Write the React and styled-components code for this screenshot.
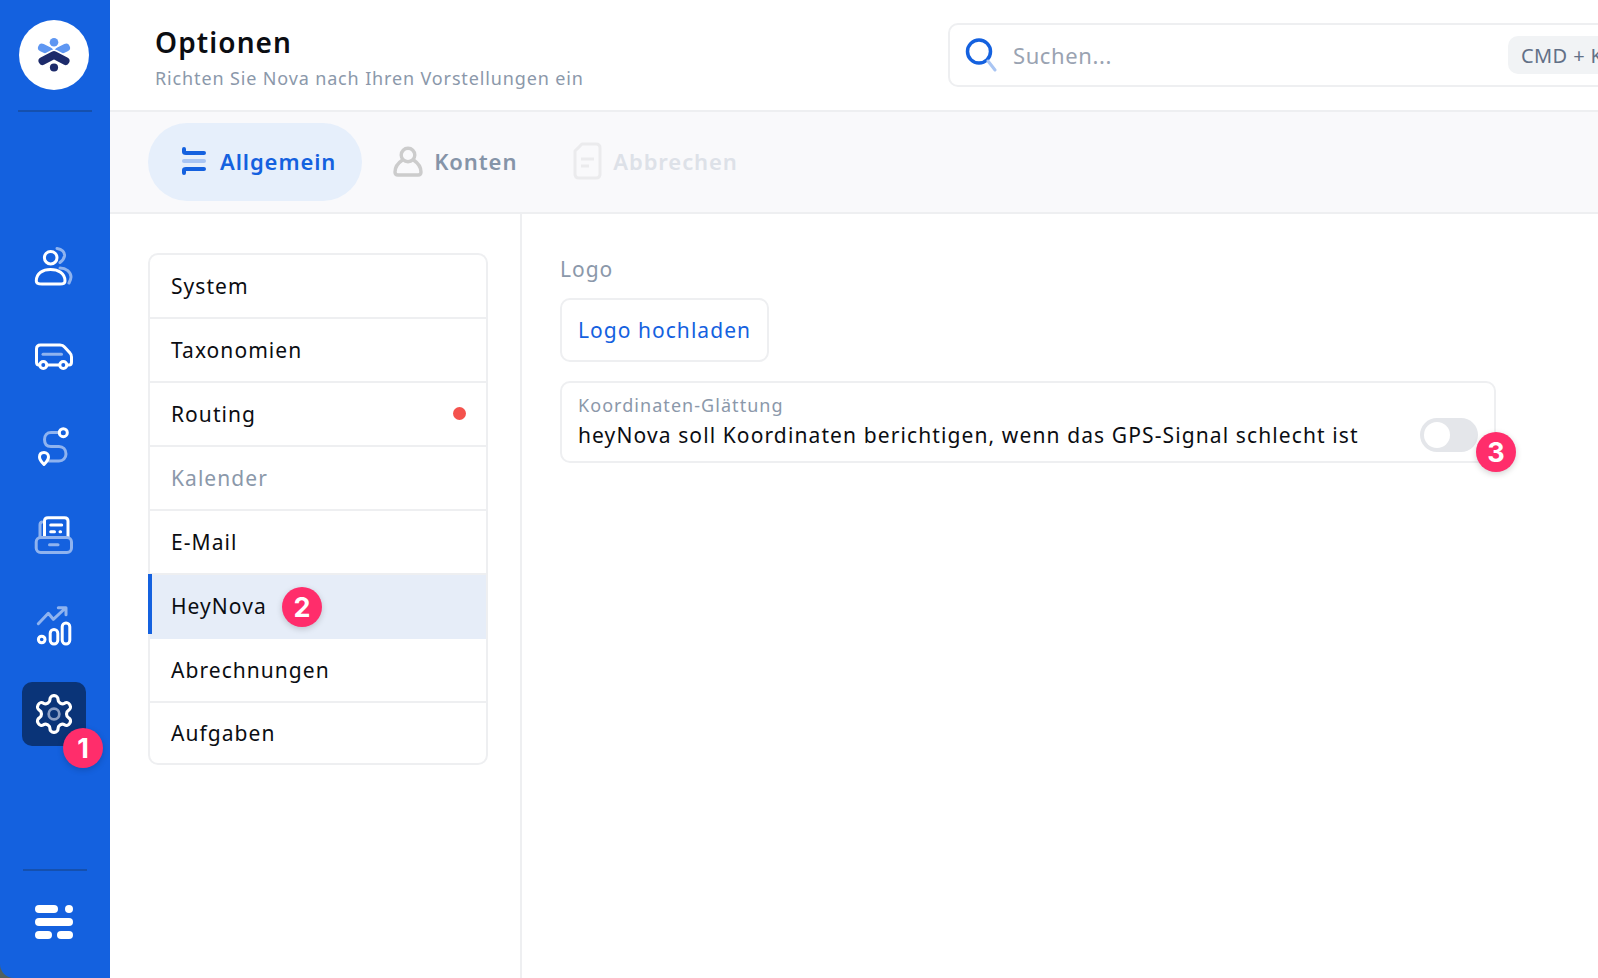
import React from "react";
import styled, { createGlobalStyle } from "styled-components";

const GlobalStyle = createGlobalStyle`
  html, body { margin: 0; padding: 0; }
  body {
    font-family: "Noto Sans", "Open Sans", sans-serif;
    background: #fff;
    overflow: hidden;
  }
  * { box-sizing: border-box; }
`;

const Shell = styled.div`
  display: flex;
  width: 1598px;
  height: 978px;
  background: #51615f;
  overflow: hidden;
`;

const Sidebar = styled.aside`
  width: 110px;
  flex-shrink: 0;
  display: flex;
  flex-direction: column;
  align-items: center;
  background: #1461df;
  padding: 20px 0 38px;
  border-bottom-left-radius: 14px;
`;

const LogoCircle = styled.div`
  width: 70px;
  height: 70px;
  border-radius: 50%;
  background: #fff;
  margin-right: 2px;
`;

const SideRule = styled.div`
  width: ${(props) => props.width}px;
  height: 2px;
  background: #1550ae;
  margin-top: ${(props) => props.top}px;
`;

const SideNav = styled.nav`
  display: flex;
  flex-direction: column;
  gap: 26px;
  margin: 120px 2px 0 0;
`;

const SideItem = styled.div`
  position: relative;
  width: 64px;
  height: 64px;
  display: flex;
  align-items: center;
  justify-content: center;
  border-radius: 10px;
  background: ${(props) => (props.active ? "#0a3478" : "transparent")};
`;

const SideBottom = styled.div`
  margin-top: auto;
  display: flex;
  flex-direction: column;
  align-items: center;
  gap: 34px;
`;

const Badge = styled.span`
  position: absolute;
  left: ${(props) => props.left}px;
  top: ${(props) => props.top}px;
  width: 40px;
  height: 40px;
  border-radius: 50%;
  display: flex;
  align-items: center;
  justify-content: center;
  background: #ff2d6b;
  color: #fff;
  font-family: Inter, "Liberation Sans", sans-serif;
  font-size: 27px;
  font-weight: 700;
  letter-spacing: 0;
  box-shadow: 0 2px 6px rgba(0, 0, 0, 0.18);
  z-index: 2;
`;

const Main = styled.main`
  flex: 1;
  min-width: 0;
  display: flex;
  flex-direction: column;
  background: #fff;
`;

const Header = styled.header`
  height: 112px;
  flex-shrink: 0;
  display: flex;
  align-items: flex-start;
  padding: 23px 0 0 45px;
  border-bottom: 2px solid #eeeff1;
`;

const HeaderText = styled.div`
  width: 793px;
  flex-shrink: 0;
`;

const Title = styled.h1`
  margin: 0;
  font-size: 28px;
  line-height: 38px;
  font-weight: 600;
  letter-spacing: 1.1px;
  color: #0b0d12;
`;

const Subtitle = styled.p`
  margin: 3px 0 0;
  font-size: 18px;
  line-height: 28px;
  letter-spacing: 0.86px;
  color: #8b98aa;
`;

const Search = styled.div`
  width: 800px;
  height: 64px;
  flex-shrink: 0;
  display: flex;
  align-items: center;
  padding-left: 15px;
  border: 2px solid #eeeff1;
  border-radius: 10px;
`;

const Placeholder = styled.span`
  flex: 1;
  margin-left: 14px;
  font-size: 22px;
  letter-spacing: 0.6px;
  color: #9aa3b2;
`;

const Kbd = styled.span`
  width: 230px;
  height: 38px;
  flex-shrink: 0;
  display: flex;
  align-items: center;
  padding-left: 13px;
  margin-right: 8px;
  border-radius: 10px;
  background: #f1f3f5;
  font-size: 20px;
  letter-spacing: 0.4px;
  color: #627087;
`;

const TabBar = styled.div`
  height: 102px;
  flex-shrink: 0;
  display: flex;
  align-items: center;
  padding-left: 38px;
  background: #f9f9fb;
  border-bottom: 2px solid #eeeff1;
`;

const Tab = styled.div`
  height: 78px;
  display: flex;
  align-items: center;
  gap: ${(props) => (props.active ? 14 : 11)}px;
  padding: ${(props) => (props.active ? "0 26px 2px 34px" : "0 25px 2px 31px")};
  border-radius: 39px;
  background: ${(props) => (props.active ? "#e6effb" : "transparent")};
  color: ${(props) => props.color};
  font-size: 22px;
  font-weight: 600;
  letter-spacing: 0.9px;
`;

const Body = styled.div`
  flex: 1;
  min-height: 0;
  display: flex;
`;

const ListPane = styled.div`
  width: 412px;
  flex-shrink: 0;
  padding: 39px 0 0 38px;
  border-right: 2px solid #eeeff1;
`;

const List = styled.ul`
  width: 340px;
  margin: 0;
  padding: 0;
  list-style: none;
  border: 2px solid #eeeff1;
  border-radius: 10px;
`;

const Row = styled.li`
  position: relative;
  height: 64px;
  display: flex;
  align-items: center;
  padding: 0 20px 0 21px;
  font-size: 21px;
  letter-spacing: 1.05px;
  color: ${(props) => (props.muted ? "#8b98aa" : "#0b0d12")};
  background: ${(props) => (props.active ? "#e6edf8" : "transparent")};
  border-bottom: 2px solid ${(props) => (props.active ? "#e6edf8" : "#eeeff1")};

  &:last-child {
    height: 60px;
    border-bottom: 0;
  }

  ${(props) =>
    props.active &&
    `
    &::before {
      content: "";
      position: absolute;
      left: -2px;
      top: -1px;
      bottom: 3px;
      width: 4px;
      background: #1461df;
    }
  `}
`;

const RowDot = styled.span`
  width: 13px;
  height: 13px;
  margin: 0 0 2px auto;
  border-radius: 50%;
  background: #f4524d;
`;

const Content = styled.section`
  flex: 1;
  padding: 38px 0 0 38px;
`;

const FieldLabel = styled.div`
  font-size: 21px;
  line-height: 34px;
  letter-spacing: 1px;
  color: #8b98aa;
`;

const UploadButton = styled.button`
  display: block;
  width: 209px;
  height: 64px;
  margin-top: 12px;
  padding: 0;
  border: 2px solid #eeeff1;
  border-radius: 10px;
  background: #fff;
  font-family: inherit;
  font-size: 21px;
  letter-spacing: 1.05px;
  color: #1461df;
`;

const OptionCard = styled.div`
  width: 936px;
  height: 82px;
  margin-top: 19px;
  display: flex;
  align-items: flex-end;
  justify-content: space-between;
  padding: 0 16px 10px 16px;
  border: 2px solid #eeeff1;
  border-radius: 10px;
`;

const OptionLabel = styled.div`
  margin-bottom: 2px;
  font-size: 18px;
  line-height: 24px;
  letter-spacing: 1.05px;
  color: #8b98aa;
`;

const OptionText = styled.div`
  font-size: 21px;
  line-height: 32px;
  letter-spacing: 1.11px;
  color: #0b0d12;
`;

const Toggle = styled.div`
  position: relative;
  width: 58px;
  height: 34px;
  margin-bottom: -1px;
  padding: 4px;
  border-radius: 17px;
  background: #e4e6ea;
`;

const Knob = styled.span`
  display: block;
  width: 26px;
  height: 26px;
  border-radius: 50%;
  background: #fff;
`;

const light = "#8fb3ef";

const LogoMark = () => (
  <svg width="70" height="70" viewBox="0 0 70 70">
    <circle cx="35" cy="22.3" r="4.3" fill="#5f97f2" />
    <path d="M23 27.7L30 31M47 27.700L40 31" stroke="#5f97f2" strokeWidth="8" strokeLinecap="round" />
    <path d="M23.500 41L35 35L46.500 41" fill="none" stroke="#fff" strokeWidth="11" strokeLinecap="round" strokeLinejoin="round" />
    <path d="M23.500 41L35 35L46.500 41" fill="none" stroke="#1d2b6b" strokeWidth="8" strokeLinecap="round" strokeLinejoin="round" />
    <circle cx="35" cy="47.500" r="4.100" fill="#1d2b6b" />
  </svg>
);

const SideIcon = styled.svg.attrs({ width: 40, height: 40, viewBox: "0 0 40 40", fill: "none" })`
  margin: 3px 2px 0 0;
  stroke: #fff;
  stroke-width: 3;
  stroke-linecap: round;
  stroke-linejoin: round;
`;

const PersonIcon = () => (
  <SideIcon>
    <circle cx="17.7" cy="11.7" r="6.3" />
    <path d="M9 38H27Q32 38 32 35C32 27 25 23.5 17.5 23.5C10 23.5 3.3 27 3.3 35Q3.3 38 9 38Z" />
    <path d="M24 2.5C29 3 32 6 31.5 10C31 13 29 15 27 16.5M27 22C33 22 38 26 38 31C38 33 37 35 36 37" stroke={light} />
  </SideIcon>
);

const VanIcon = () => (
  <SideIcon>
    <path d="M6.5 29H6Q3.5 29 3.5 26V13Q3.5 9 7.5 9H27Q30 9 31.5 11L37 17Q38.5 18.5 38.5 21V26Q38.5 29 36 29H34M26.5 29H14" />
    <circle cx="10.3" cy="29" r="3.5" />
    <circle cx="30.3" cy="29" r="3.5" />
    <path d="M10 18.3H28.5" stroke={light} />
  </SideIcon>
);

const RouteIcon = () => (
  <SideIcon>
    <path d="M26 6.5H18C14 6.5 11.5 9.5 11.5 13.5C11.5 18 14 20.5 18 20.5H26C30 20.5 33 23.5 33 28C33 32 30 35 26 35H16" stroke={light} />
    <circle cx="30.3" cy="6.7" r="4" />
    <path d="M11 26.5C8 26.5 6.5 28.5 6.5 31C6.5 34 9 36.5 11 38.5C13 36.5 15.5 34 15.5 31C15.5 28.5 13.5 26.5 11 26.5Z" />
  </SideIcon>
);

const FaxIcon = () => (
  <SideIcon>
    <path d="M7 21V9Q7 6.5 9 6" stroke={light} />
    <path d="M11.5 21V5Q11.5 1.8 15 1.8H31.5Q35 1.8 35 5V21" />
    <rect x="3.2" y="21.5" width="35.3" height="15" rx="4.5" stroke={light} />
    <path d="M17.7 9H28.7M17.7 15.7H21.5M27 15.7H27.6" />
    <path d="M16.5 28.7H25" stroke={light} />
  </SideIcon>
);

const ChartIcon = () => (
  <SideIcon>
    <path d="M5.3 17.7L15.3 7.3L20.3 13.3L32 2.5M25.3 1.7H33V8.8" stroke={light} />
    <circle cx="8.7" cy="33.5" r="3.3" />
    <rect x="17.2" y="23.5" width="7.6" height="14.5" rx="3.8" />
    <rect x="29.2" y="17" width="7.6" height="21" rx="3.8" />
  </SideIcon>
);

const GearIcon = () => (
  <svg width="44" height="44" viewBox="0 0 24 24" fill="none" strokeLinecap="round" strokeLinejoin="round">
    <path
      d="M12.22 2h-.44a2 2 0 0 0-2 2v.18a2 2 0 0 1-1 1.73l-.43.25a2 2 0 0 1-2 0l-.15-.08a2 2 0 0 0-2.73.73l-.22.38a2 2 0 0 0 .73 2.73l.15.1a2 2 0 0 1 1 1.72v.51a2 2 0 0 1-1 1.74l-.15.09a2 2 0 0 0-.73 2.73l.22.38a2 2 0 0 0 2.73.73l.15-.08a2 2 0 0 1 2 0l.43.25a2 2 0 0 1 1 1.73V20a2 2 0 0 0 2 2h.44a2 2 0 0 0 2-2v-.18a2 2 0 0 1 1-1.73l.43-.25a2 2 0 0 1 2 0l.15.08a2 2 0 0 0 2.73-.73l.22-.39a2 2 0 0 0-.73-2.73l-.15-.08a2 2 0 0 1-1-1.74v-.5a2 2 0 0 1 1-1.74l.15-.09a2 2 0 0 0 .73-2.73l-.22-.38a2 2 0 0 0-2.73-.73l-.15.08a2 2 0 0 1-2 0l-.43-.25a2 2 0 0 1-1-1.73V4a2 2 0 0 0-2-2z"
      stroke="#fff"
      strokeWidth="1.7"
    />
    <circle cx="12" cy="12" r="2.9" stroke="#8b9fc4" strokeWidth="1.5" />
  </svg>
);

const MenuSvg = styled.svg`
  margin-right: 2px;
`;

const MenuIcon = () => (
  <MenuSvg width="38" height="35" viewBox="0 0 38 35" fill="#fff">
    <rect x="0" y="0" width="23" height="8" rx="4" />
    <circle cx="34" cy="4" r="4" />
    <rect x="0" y="13" width="38" height="8" rx="4" />
    <rect x="0" y="26" width="17" height="8" rx="4" />
    <rect x="22" y="26" width="16" height="8" rx="4" />
  </MenuSvg>
);

const SearchIcon = () => (
  <svg width="34" height="34" viewBox="0 0 34 34" fill="none" strokeLinecap="round">
    <circle cx="14" cy="13.500" r="11.5" stroke="#1461df" strokeWidth="3.500" />
    <path d="M23 23L30 32" stroke="#a9c5f3" strokeWidth="3" />
  </svg>
);

const GeneralIcon = () => (
  <svg width="24" height="28" viewBox="0 0 24 28" fill="none" strokeWidth="4" strokeLinecap="round">
    <path d="M2 2V5Q2 6 4 6H22" stroke="#1461df" />
    <path d="M2 14H22" stroke="#a9c5f3" />
    <path d="M2 26V23Q2 22 4 22H22" stroke="#1461df" />
  </svg>
);

const AccountIcon = () => (
  <svg width="30" height="31" viewBox="0 0 30 31" fill="none" stroke="#cccccc" strokeWidth="3.4">
    <circle cx="15" cy="9" r="6.800" />
    <path d="M9.500 14C5 17 2 22 2 26Q2 29 5 29H25Q28 29 28 26C28 22 25 17 20.500 14" strokeLinecap="round" />
  </svg>
);

const CancelIcon = () => (
  <svg width="29" height="38" viewBox="0 0 29 38" fill="none" stroke="#ebebed" strokeWidth="3">
    <path d="M9 2H23Q27 2 27 6V32Q27 36 23 36H6Q2 36 2 32V9Z" strokeLinejoin="round" />
    <path d="M8 17H21M8 24H16" />
  </svg>
);

const sideItems = [
  { icon: <PersonIcon />, key: "people" },
  { icon: <VanIcon />, key: "vehicles" },
  { icon: <RouteIcon />, key: "routes" },
  { icon: <FaxIcon />, key: "orders" },
  { icon: <ChartIcon />, key: "reports" },
];

const listItems = ["System", "Taxonomien", "Routing", "Kalender", "E-Mail", "HeyNova", "Abrechnungen", "Aufgaben"];

const App = () => {
  return (
    <Shell>
      <GlobalStyle />
      <Sidebar>
        <LogoCircle>
          <LogoMark />
        </LogoCircle>
        <SideRule width={74} top={20} />
        <SideNav>
          {sideItems.map((item) => (
            <SideItem key={item.key}>{item.icon}</SideItem>
          ))}
          <SideItem active>
            <GearIcon />
            <Badge left={41} top={46}>1</Badge>
          </SideItem>
        </SideNav>
        <SideBottom>
          <SideRule width={64} top={0} />
          <MenuIcon />
        </SideBottom>
      </Sidebar>
      <Main>
        <Header>
          <HeaderText>
            <Title>Optionen</Title>
            <Subtitle>Richten Sie Nova nach Ihren Vorstellungen ein</Subtitle>
          </HeaderText>
          <Search>
            <SearchIcon />
            <Placeholder>Suchen...</Placeholder>
            <Kbd>CMD + K</Kbd>
          </Search>
        </Header>
        <TabBar>
          <Tab active color="#1461df">
            <GeneralIcon />
            Allgemein
          </Tab>
          <Tab color="#8594a8">
            <AccountIcon />
            Konten
          </Tab>
          <Tab color="#dde1e8">
            <CancelIcon />
            Abbrechen
          </Tab>
        </TabBar>
        <Body>
          <ListPane>
            <List>
              {listItems.map((name) => (
                <Row key={name} active={name === "HeyNova"} muted={name === "Kalender"}>
                  {name}
                  {name === "Routing" && <RowDot />}
                  {name === "HeyNova" && <Badge left={132} top={12}>2</Badge>}
                </Row>
              ))}
            </List>
          </ListPane>
          <Content>
            <FieldLabel>Logo</FieldLabel>
            <UploadButton>Logo hochladen</UploadButton>
            <OptionCard>
              <div>
                <OptionLabel>Koordinaten-Glättung</OptionLabel>
                <OptionText>heyNova soll Koordinaten berichtigen, wenn das GPS-Signal schlecht ist</OptionText>
              </div>
              <Toggle>
                <Knob />
                <Badge left={56} top={14}>3</Badge>
              </Toggle>
            </OptionCard>
          </Content>
        </Body>
      </Main>
    </Shell>
  );
};

export default App;
